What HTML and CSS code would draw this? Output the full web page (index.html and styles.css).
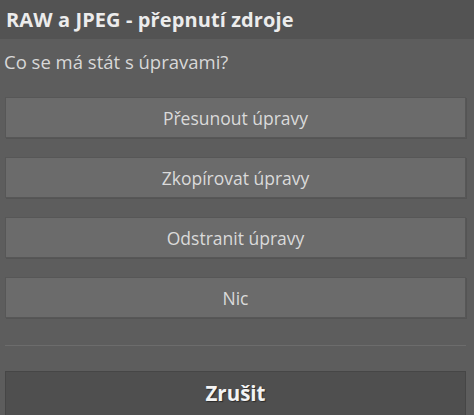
FILE: index.html
```html
<!DOCTYPE html>
<html lang="cs">
<head>
    <meta charset="UTF-8">
    <title>RAW a JPEG - přepnutí zdroje</title>
    <link rel="stylesheet" href="styles.css">
</head>
<body>

<div class="dialog">
    <header class="dialog-header">
        <h1>RAW a JPEG - přepnutí zdroje</h1>
    </header>

    <p class="question">Co se má stát s úpravami?</p>

    <!-- Volby -->
    <div class="options">
        <button class="option-button">Přesunout úpravy</button>
        <button class="option-button">Zkopírovat úpravy</button>
        <button class="option-button">Odstranit úpravy</button>
        <button class="option-button">Nic</button>
    </div>

    <hr class="separator">

    <button class="cancel-button">Zrušit</button>
</div>

</body>
</html>
```

FILE: styles.css
```css
* {
    margin: 0;
    padding: 0;
    box-sizing: border-box;
}
body {
    font-family: "Open Sans", "Noto Sans", sans-serif;
    background-color: #5d5d5d;
    color: #dcdcdc;
    overflow: hidden;
}
.dialog {
    width: 474px;
    height: 415px;
    display: flex;
    flex-direction: column;
}
.dialog-header {
    background-color: #535353;
    height: 39px;
    flex-shrink: 0;
    display: flex;
    align-items: center;
    padding-left: 6px;
}
.dialog-header h1 {
    font-size: 20px;
    font-weight: bold;
    color: #ececec;
    letter-spacing: 0.1px;
}
.question {
    font-size: 18.5px;
    line-height: 25px;
    padding: 10px 0 0 4px;
    height: 58px;
    flex-shrink: 0;
    color: #d8d8d8;
}
.options {
    display: flex;
    flex-direction: column;
    gap: 19px;
    padding: 0 8px 0 5px;
}
button {
    font-family: inherit;
    cursor: pointer;
}
.option-button {
    height: 41px;
    flex-shrink: 0;
    background-color: #6b6b6b;
    border: 1px solid #575757;
    box-shadow: 1px 1px 0 #545454;
    color: #dadada;
    font-size: 17.5px;
}
.separator {
    border: none;
    height: 1px;
    flex-shrink: 0;
    background-color: #6c6c6c;
    margin: 27px 8px 0 5px;
}
.cancel-button {
    margin: 25px 8px 0 5px;
    height: 46px;
    flex-shrink: 0;
    background-color: #4f4f4f;
    border: 1px solid #464646;
    color: #f4f4f4;
    font-size: 20.5px;
    font-weight: bold;
    text-shadow: 1px 1px 1px #2a2a2a;
    padding-bottom: 2px;
}
```
